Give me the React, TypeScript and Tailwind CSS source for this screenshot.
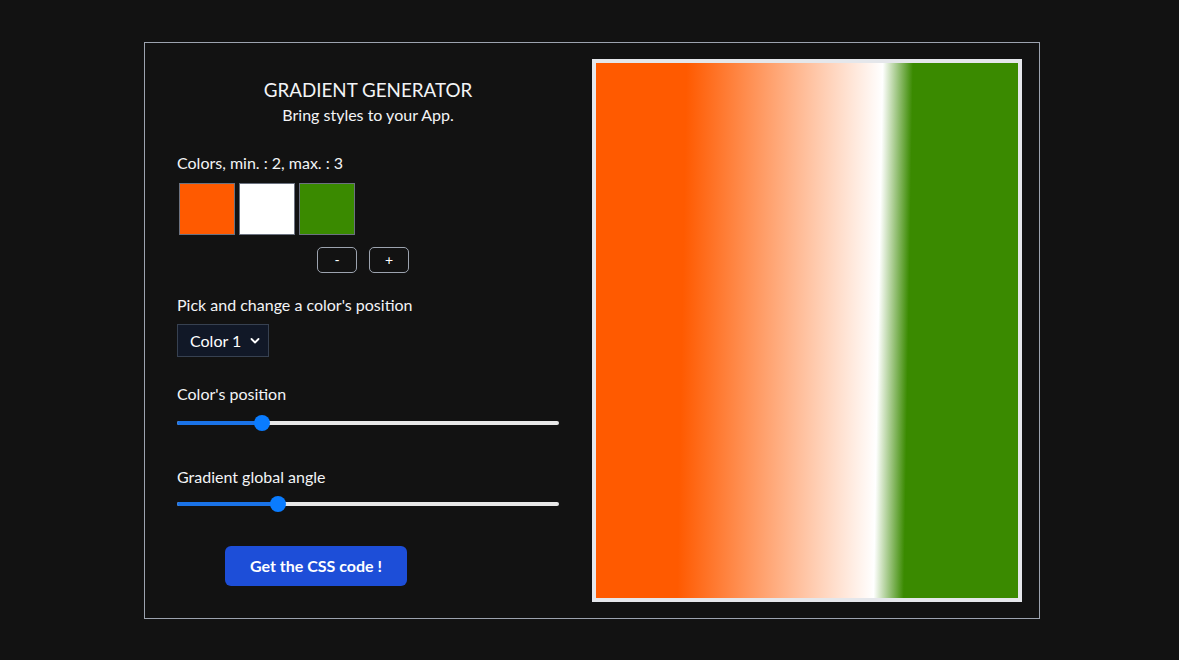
import React from "react";

function Slider({ pct }: { pct: number }) {
  return (
    <div className="relative h-[16px] w-[382px] flex items-center">
      <div className="h-[4px] w-full rounded-full bg-[#e8e8e8] flex">
        <div className="h-full rounded-l-full bg-[#1a73e8]" style={{ width: `${pct}px` }} />
      </div>
      <div
        className="absolute top-0 h-[16px] w-[16px] rounded-full bg-[#0a7cff]"
        style={{ left: `${pct - 8}px` }}
      />
    </div>
  );
}

export default function App() {
  return (
    <div
      className="min-h-[660px] w-full bg-[#121212] pt-[42px] text-[#f3f4f6]"
      style={{ fontFamily: "Lato, 'Open Sans', sans-serif" }}
    >
      <div className="ml-[144px] flex h-[577px] w-[896px] border border-[#9ca3af] py-[16px] pl-[32px] pr-[16px]">
        <div className="flex w-[382px] flex-col">
          <div className="mt-[17px] text-center text-[18.8px] leading-[27px]">GRADIENT GENERATOR</div>
          <div className="text-center text-[16px] leading-[24px]">Bring styles to your App.</div>

          <div className="mt-[24px] text-[16px] leading-[24px]">Colors, min. : 2, max. : 3</div>
          <div className="mt-[8px] ml-[2px] flex gap-[4px]">
            <div className="h-[52px] w-[56px] border border-[#6b7280] bg-[#ff5a00]" />
            <div className="h-[52px] w-[56px] border border-[#6b7280] bg-white" />
            <div className="h-[52px] w-[56px] border border-[#6b7280] bg-[#3a8a00]" />
          </div>
          <div className="mt-[12px] ml-[140px] flex gap-[12px]">
            <button className="flex h-[26px] w-[40px] items-center justify-center rounded-[5px] border border-[#9ca3af] text-[14px] leading-none text-white">
              -
            </button>
            <button className="flex h-[26px] w-[40px] items-center justify-center rounded-[5px] border border-[#9ca3af] text-[14px] leading-none text-white">
              +
            </button>
          </div>

          <div className="mt-[20px] text-[16px] leading-[24px]">Pick and change a color's position</div>
          <div className="mt-[7px] flex h-[33px] w-[92px] items-center border border-[#374151] bg-[#111827] pl-[12px] pr-[8px] text-[16px] text-white">
            <span>Color 1</span>
            <svg className="ml-auto" width="10" height="8" viewBox="0 0 10 8" fill="none">
              <path d="M1.5 2L5 5.5L8.5 2" stroke="white" strokeWidth="1.8" strokeLinecap="round" strokeLinejoin="round" />
            </svg>
          </div>

          <div className="mt-[25px] text-[16px] leading-[24px]">Color's position</div>
          <div className="mt-[9px]">
            <Slider pct={85} />
          </div>

          <div className="mt-[34px] text-[16px] leading-[24px]">Gradient global angle</div>
          <div className="mt-[7px]">
            <Slider pct={101} />
          </div>

          <button className="mt-[34px] ml-[48px] h-[40px] w-[182px] rounded-[6px] bg-[#1d4ed8] text-[16px] font-bold text-white">
            Get the CSS code !
          </button>
        </div>

        <div className="ml-[33px] h-[543px] w-[430px] border-4 border-[#e5e7eb]">
          <div
            className="h-full w-full"
            style={{
              background: "linear-gradient(91deg, #ff5a00 21%, #ffffff 66.5%, #3a8a00 73.5%)",
            }}
          />
        </div>
      </div>
    </div>
  );
}
